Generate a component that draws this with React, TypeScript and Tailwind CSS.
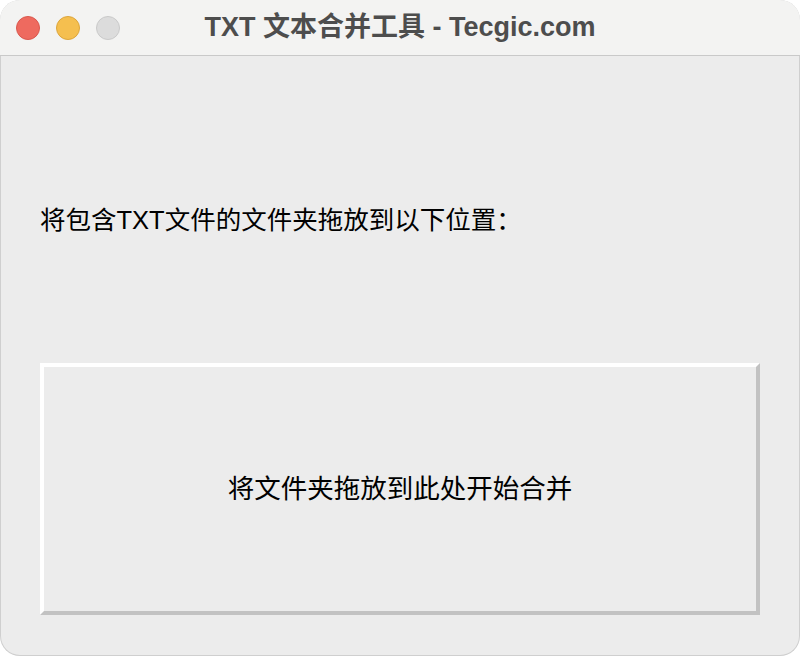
import React from 'react';

const FONT = '[font-family:"Liberation_Sans","Noto_Sans_CJK_SC",sans-serif]';

function TrafficLights() {
  return (
    <div className="flex items-center gap-4 pl-4">
      <span className="block w-6 h-6 rounded-full bg-[#ee6a5f] border border-[#d9584e]" />
      <span className="block w-6 h-6 rounded-full bg-[#f5bf4f] border border-[#dca53c]" />
      <span className="block w-6 h-6 rounded-full bg-[#dcdcdc] border border-[#c9c9c9]" />
    </div>
  );
}

export default function App() {
  return (
    <div className="w-[800px] h-[656px] bg-white">
      <div className="w-full h-full rounded-[20px] overflow-hidden bg-[#ececec] flex flex-col shadow-[inset_0_0_0_1px_rgba(0,0,0,0.12)]">
        {/* Title bar */}
        <div className="relative h-14 shrink-0 bg-[#f3f3f2] border-b border-[#c9c9c9] flex items-center">
          <TrafficLights />
          <div className="absolute inset-0 flex items-center justify-center pointer-events-none">
            <span className={`${FONT} text-[27px] font-bold text-[#4d4d4d]`}>
              TXT 文本合并工具 - Tecgic.com
            </span>
          </div>
        </div>

        {/* Body */}
        <div className="flex-1 flex flex-col px-10">
          <p className={`${FONT} mt-[146px] text-[25.5px] leading-9 text-black`}>
            将包含TXT文件的文件夹拖放到以下位置：
          </p>
          <div className="mt-[125px] w-[720px] h-[252px] border-4 border-t-white border-l-white border-r-[#c2c2c2] border-b-[#c2c2c2] flex items-center justify-center">
            <span className={`${FONT} text-[26.5px] leading-9 text-black`}>
              将文件夹拖放到此处开始合并
            </span>
          </div>
        </div>
      </div>
    </div>
  );
}
